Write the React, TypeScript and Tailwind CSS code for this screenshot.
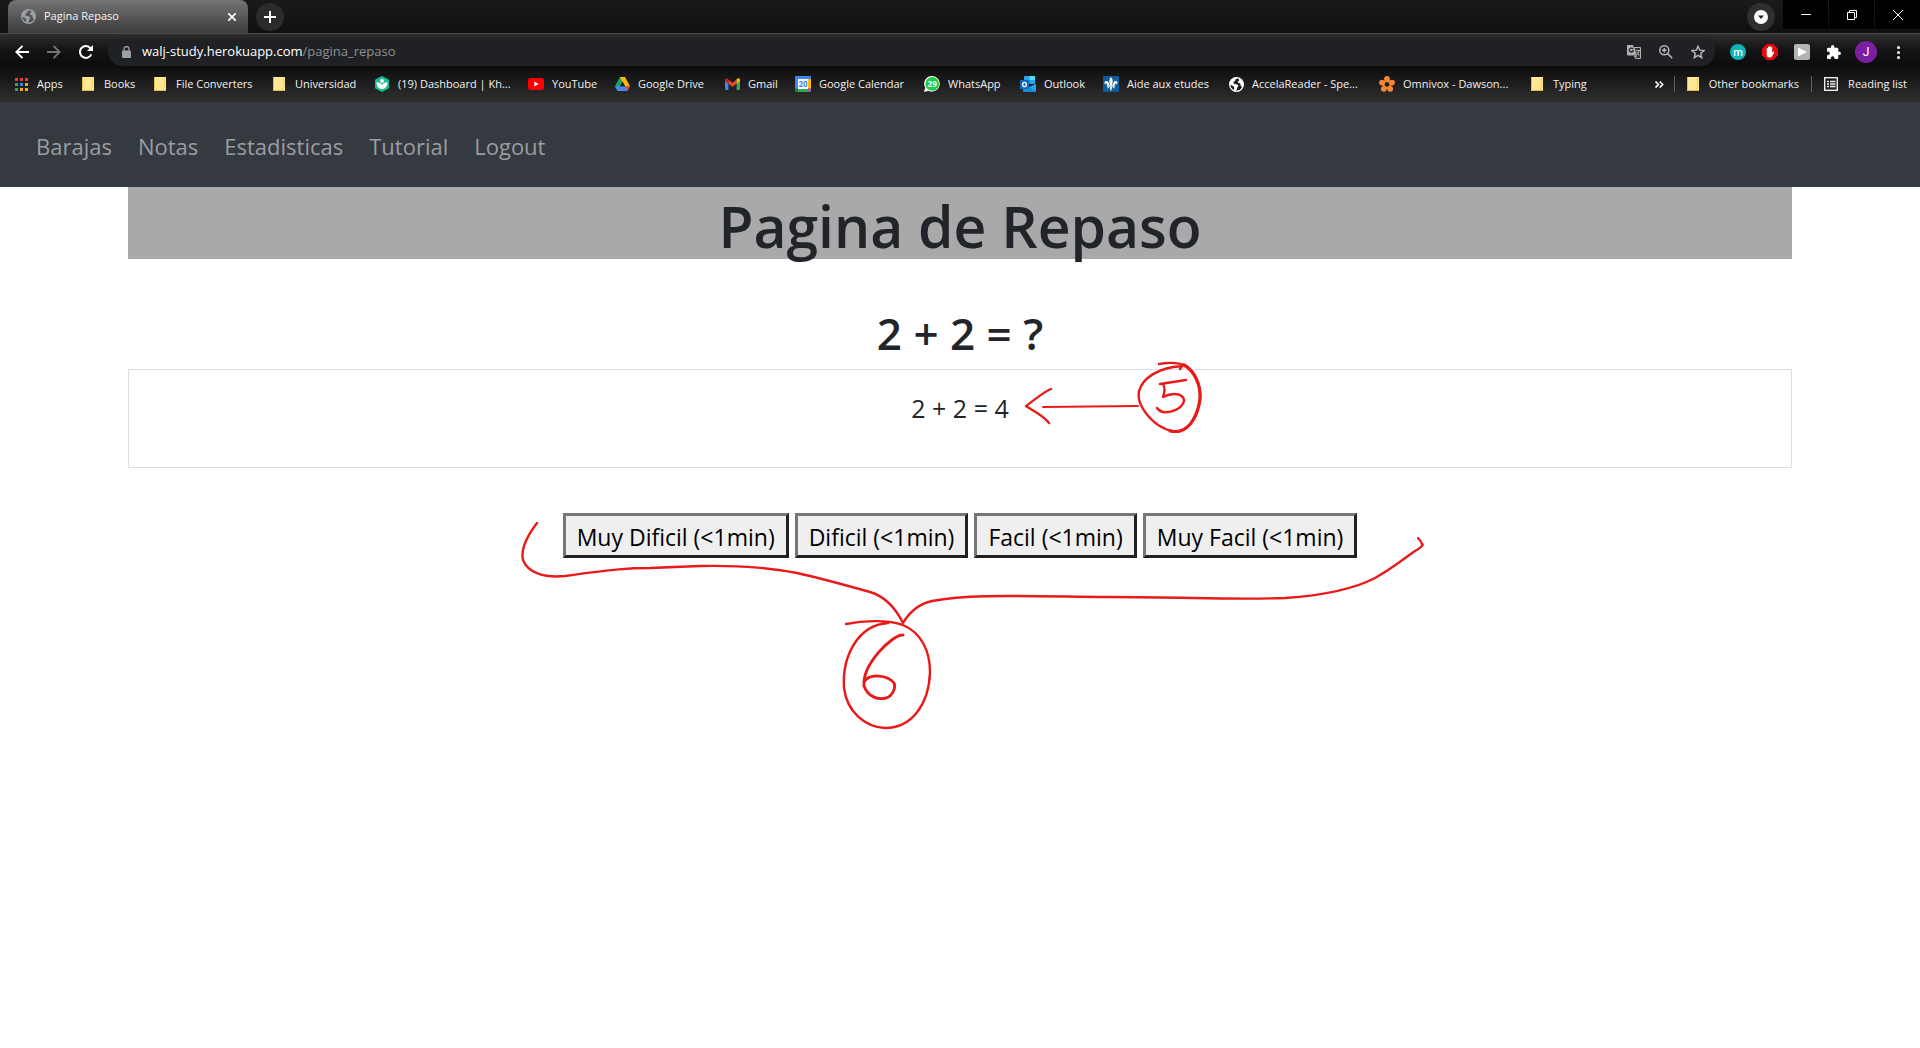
import React from "react";

const Folder = () => (
  <svg width="12" height="14" viewBox="0 0 12 14">
    <path d="M0 0H12V9V14H0Z" fill="#ffe793" />
    <path d="M.5 0V13.5H12" fill="none" stroke="#e2bb4b" />
    <path d="M9.500 13V10.500L10.500 9.500V1" fill="none" stroke="#f3cd62" />
  </svg>
);

const Apps = () => {
  const c = ["#f13a30", "#f13a30", "#f13a30", "#34a853", "#2a8cf5", "#fba31a", "#34a853", "#fba31a", "#fba31a"];
  return (
    <svg width="13" height="13" viewBox="0 0 13 13">
      {c.map((f, i) => (
        <rect key={i} x={(i % 3) * 5} y={Math.floor(i / 3) * 5} width="3" height="3" fill={f} />
      ))}
    </svg>
  );
};

const Khan = () => (
  <svg width="14" height="16" viewBox="0 0 14 16">
    <path d="M7 0L13.2 3.3Q14 3.8 14 4.6V11.4Q14 12.2 13.2 12.7L7 16L.8 12.7Q0 12.2 0 11.4V4.6Q0 3.8.8 3.3Z" fill="#14bf96" />
    <circle cx="7" cy="5" r="1.9" fill="#fff" />
    <path d="M1.500 6.200C4.500 6.400 6.400 7.500 7 9C7.600 7.500 9.500 6.400 12.500 6.200C12.500 10.500 10 13 7 13S1.500 10.500 1.500 6.200Z" fill="#fff" />
  </svg>
);

const YouTube = () => (
  <svg width="16" height="12" viewBox="0 0 16 12">
    <rect width="16" height="12" rx="3" fill="#f00" />
    <path d="M6.300 3.500L10.600 6L6.300 8.500Z" fill="#fff" />
  </svg>
);

const Drive = () => (
  <svg width="15" height="14" viewBox="0 0 15 14">
    <path d="M5 0H7.500L8.500 4L2.700 14L0 9.200Z" fill="#1ea362" />
    <path d="M5 0H10L15 9.200H10Z" fill="#ffba00" />
    <path d="M0 9.200H15L12.300 14H2.700Z" fill="#4688f4" />
    <path d="M7.500 4.500L10 9.200H5Z" fill="#1c1c1c" />
    <path d="M12.300 14L15 9.200H10Z" fill="#ea4335" />
  </svg>
);

const Gmail = () => (
  <svg width="15" height="12" viewBox="0 0 15 12">
    <path d="M0 2V11Q0 12 1 12H3.400V4Z" fill="#4285f4" />
    <path d="M15 2V11Q15 12 14 12H11.600V4Z" fill="#34a853" />
    <path d="M3.400 1.500L7.500 4.700L11.600 1.500V5.700L7.500 8.900L3.400 5.700Z" fill="#ea4335" />
    <path d="M0 2Q0 .2 1.600.2Q2.300.2 3.400 1.300V5.700L0 3.200Z" fill="#c5221f" />
    <path d="M15 2Q15 .2 13.400.2Q12.700.2 11.600 1.300V5.700L15 3.200Z" fill="#fbbc04" />
  </svg>
);

const Calendar = () => (
  <svg width="16" height="16" viewBox="0 0 16 16">
    <rect width="16" height="16" rx="1" fill="#4285f4" />
    <path d="M13 3H16V12.500H13Z" fill="#fbbc04" />
    <path d="M3 12.500H13V16H3Z" fill="#34a853" />
    <path d="M0 12.500H3V16H1Q0 16 0 15Z" fill="#188038" />
    <path d="M13 12.500H16L13 16Z" fill="#ea4335" />
    <rect x="3" y="3" width="10" height="10" fill="#fff" />
    <text x="8" y="11" fontSize="8" fontWeight="700" textAnchor="middle" fill="#4285f4">20</text>
  </svg>
);

const WhatsApp = () => (
  <svg width="16" height="16" viewBox="0 0 16 16">
    <path d="M8.200 0A7.800 7.800 0 1 1 4.500 14.800L0 16L1.300 11.800A7.800 7.800 0 0 1 8.200 0Z" fill="#fff" />
    <circle cx="8.200" cy="7.900" r="6.800" fill="#1fc94c" />
    <text x="8.200" y="11" fontSize="8" fontWeight="700" textAnchor="middle" fill="#fff">29</text>
  </svg>
);

const Outlook = () => (
  <svg width="16" height="16" viewBox="0 0 16 16">
    <path d="M4 1Q4 0 5 0H14Q15 0 15 1V8H4Z" fill="#28a8ea" />
    <path d="M9.500 0H14Q15 0 15 1V4H9.500Z" fill="#50d9ff" />
    <path d="M4 4H9.500V8H4Z" fill="#0364b8" />
    <path d="M3 15V8L9.500 11L16 8V15Q16 16 15 16H4Q3 16 3 15Z" fill="#1490df" />
    <path d="M16 8V15L9.500 11Z" fill="#28a8ea" />
    <rect y="4" width="9" height="9" rx="1" fill="#0f6cbd" />
    <ellipse cx="4.500" cy="8.500" rx="1.900" ry="2.200" fill="none" stroke="#fff" strokeWidth="1.300" />
  </svg>
);

const Fleur = () => (
  <svg width="16" height="16" viewBox="0 0 16 16">
    <rect width="16" height="16" fill="#0f5c9c" />
    <g fill="#fff">
      <path d="M8 1C10 3.500 10 5 9 9H7C6 5 6 3.500 8 1Z" />
      <path d="M6.300 9C6 6.500 5 5 3.300 5C1.500 5 1 7 2 8.500C2.200 7.300 3.600 7.200 4.300 9Z" />
      <path d="M9.700 9C10 6.500 11 5 12.700 5C14.500 5 15 7 14 8.500C13.800 7.300 12.400 7.200 11.700 9Z" />
      <rect x="3.800" y="9.200" width="8.400" height="1.300" />
      <path d="M7 10.500H9L8.800 13L8 15L7.200 13ZM5 10.500H6.500Q6.300 12.500 4.300 12.500ZM11 10.500H9.500Q9.700 12.500 11.700 12.500Z" />
    </g>
  </svg>
);

const Globe = ({ color, land }: { color: string; land: string }) => (
  <svg width="15" height="15" viewBox="0 0 15 15">
    <circle cx="7.500" cy="7.500" r="7.500" fill={color} />
    <path d="M9.500 1.600C7 2 5.800 2.500 6.300 3.800C5 4.200 4 5 4.600 6.500C6 7.300 8.500 6.900 9.300 8.300C9.800 9.600 8 10.200 8 11.500C8 12.500 7.300 13.200 6.700 13.500A6.200 6.200 0 0 0 13 10C12.500 9 11.300 9 11.500 7.500C11.800 6.300 9.500 6.300 8.700 5.300C8.600 4.500 9.800 4 10.200 3.200ZM1.400 7.400C2.500 8.500 4.800 8.600 5 10C5 11.200 5.400 12 4.900 13A6.200 6.200 0 0 1 1.400 7.400Z" fill={land} />
  </svg>
);

const Omnivox = () => (
  <svg width="16" height="16" viewBox="0 0 16 16">
    <g fill="#f58634">
      <circle cx="8" cy="2.900" r="2.900" />
      <circle cx="13" cy="6.600" r="2.900" />
      <circle cx="11.200" cy="12.800" r="2.900" />
      <circle cx="4.800" cy="12.800" r="2.900" />
      <circle cx="3" cy="6.600" r="2.900" />
      <circle cx="8" cy="8.500" r="4.500" />
    </g>
    <circle cx="8" cy="8.400" r="2.400" fill="#2a211c" />
  </svg>
);

type Mark = { label: string; icon: React.ReactNode; w: string };
const marks: Mark[] = [
  { label: "Apps", icon: <Apps />, w: "w-[67px]" },
  { label: "Books", icon: <Folder />, w: "w-[72px]" },
  { label: "File Converters", icon: <Folder />, w: "w-[119px]" },
  { label: "Universidad", icon: <Folder />, w: "w-[103px]" },
  { label: "(19) Dashboard | Kh...", icon: <Khan />, w: "w-[154px]" },
  { label: "YouTube", icon: <YouTube />, w: "w-[86px]" },
  { label: "Google Drive", icon: <Drive />, w: "w-[110px]" },
  { label: "Gmail", icon: <Gmail />, w: "w-[71px]" },
  { label: "Google Calendar", icon: <Calendar />, w: "w-[129px]" },
  { label: "WhatsApp", icon: <WhatsApp />, w: "w-[96px]" },
  { label: "Outlook", icon: <Outlook />, w: "w-[83px]" },
  { label: "Aide aux etudes", icon: <Fleur />, w: "w-[125px]" },
  { label: "AccelaReader - Spe...", icon: <Globe color="#fff" land="#1c1c1c" />, w: "w-[151px]" },
  { label: "Omnivox - Dawson...", icon: <Omnivox />, w: "w-[150px]" },
  { label: "Typing", icon: <Folder />, w: "w-[80px]" },
];

const TabStrip = () => (
  <div className="flex h-[33px] items-start bg-gradient-to-b from-[#1a1a1a] to-[#101010]">
    <div className="ml-2 flex h-[33px] w-60 items-center rounded-t-lg bg-gradient-to-b from-[#757575] to-[#3c3c3c] pl-[13px] pr-2 text-[#f5f5f5]">
      <Globe color="#9aa0a6" land="#555" />
      <span className="ml-2 flex-1 text-[11px]">Pagina Repaso</span>
      <button aria-label="Close tab" className="p-1">
        <svg width="8" height="8" viewBox="0 0 8 8" stroke="#fff" strokeWidth="1.700"><path d="M0 0L8 8M8 0L0 8" /></svg>
      </button>
    </div>
    <button aria-label="New tab" className="ml-2 mt-[3px] flex size-7 items-center justify-center rounded-full bg-[#2b2b2b]">
      <svg width="12" height="12" viewBox="0 0 12 12" stroke="#fff" strokeWidth="2"><path d="M6 0V12M0 6H12" /></svg>
    </button>
    <div className="flex-1" />
    <button aria-label="Search tabs" className="mr-2 mt-[3px] flex size-7 items-center justify-center rounded-full bg-[#2f2f2f]">
      <svg width="14" height="14" viewBox="0 0 14 14"><circle cx="7" cy="7" r="7" fill="#fff" /><path d="M4 5.500H10L7 9Z" fill="#222" /></svg>
    </button>
    <div className="flex h-[29px] gap-px text-white">
      <button aria-label="Minimize" className="flex w-[45px] items-center justify-center bg-black">
        <svg width="10" height="10" viewBox="0 0 10 10"><path d="M0 4.500H10" stroke="#fff" /></svg>
      </button>
      <button aria-label="Restore" className="flex w-[45px] items-center justify-center bg-black">
        <svg width="10" height="10" viewBox="0 0 10 10" fill="none" stroke="#fff"><path d="M.5 2.500H7.500V9.500H.5ZM2.500 2.500V.5H9.500V7.500H7.500" /></svg>
      </button>
      <button aria-label="Close" className="flex w-[45px] items-center justify-center bg-black">
        <svg width="10" height="10" viewBox="0 0 10 10" stroke="#fff"><path d="M0 0L10 10M10 0L0 10" /></svg>
      </button>
    </div>
  </div>
);

const Toolbar = () => (
  <div className="flex h-[33px] items-center border-t border-[#4a4a4a] bg-gradient-to-b from-[#2e2e2e] via-[#141414] to-[#0c0c0c] pt-1">
    <div className="flex w-[108px] items-center gap-[18px] pl-[15px]">
      <button aria-label="Back">
        <svg width="14" height="14" viewBox="0 0 14 14" fill="none" stroke="#fff" strokeWidth="1.900"><path d="M14 7H1.500M7.500 .8L1.300 7L7.500 13.200" /></svg>
      </button>
      <button aria-label="Forward">
        <svg width="14" height="14" viewBox="0 0 14 14" fill="none" stroke="#757575" strokeWidth="1.900"><path d="M0 7H12.500M6.500 .8L12.700 7L6.500 13.200" /></svg>
      </button>
      <button aria-label="Reload">
        <svg width="14" height="14" viewBox="0 0 14 14"><path d="M12.300 9.300A5.900 5.900 0 1 1 11.500 3.300" fill="none" stroke="#fff" strokeWidth="2" /><path d="M14 0V6H8Z" fill="#fff" /></svg>
      </button>
    </div>
    <div className="flex h-7 flex-1 items-center rounded-full bg-[#202124] pl-[14px] pr-[10px]">
      <svg width="9" height="12" viewBox="0 0 9 12"><rect y="4.500" width="9" height="7.500" rx="1" fill="#9aa0a6" /><path d="M2 5V3A2.500 2.500 0 0 1 7 3V5" fill="none" stroke="#9aa0a6" strokeWidth="1.300" /></svg>
      <input aria-label="Address" className="sr-only" defaultValue="walj-study.herokuapp.com/pagina_repaso" />
      <span className="ml-[11px] flex-1 text-[13px] text-[#8d9093]"><span className="text-white">walj-study.herokuapp.com</span>/pagina_repaso</span>
      <div className="flex items-center gap-[18px]">
        <button aria-label="Translate">
          <svg width="14" height="14" viewBox="0 0 14 14"><path d="M0 0H6L9 10.500H1Q0 10.500 0 9.500Z" fill="#b0b0b0" /><path d="M7 2.500H13.500V13.500H8.500L7.500 11.500H9.500Z" fill="#333" stroke="#b0b0b0" /><path d="M6 4A2 2 0 1 0 6.200 5.800H4.600" fill="none" stroke="#222" strokeWidth="1.200" /><path d="M8.500 5.500H13M12.300 5.500Q11.800 8.500 9.300 10M9.500 7L12.300 10.500" stroke="#b0b0b0" fill="none" /></svg>
        </button>
        <button aria-label="Zoom">
          <svg width="14" height="14" viewBox="0 0 14 14" fill="none" stroke="#b8b8b8" strokeWidth="1.500"><circle cx="5.300" cy="5.300" r="4.500" /><path d="M8.600 8.600L13.300 13.300M5.300 3V7.600M3 5.300H7.600" /></svg>
        </button>
        <button aria-label="Bookmark this page">
          <svg width="14" height="14" viewBox="0 0 14 14" fill="none" stroke="#b8b8b8" strokeWidth="1.400"><path d="M7 1.200L8.700 5.200L13 5.600L9.700 8.400L10.700 12.700L7 10.400L3.300 12.700L4.300 8.400L1 5.600L5.300 5.200Z" /></svg>
        </button>
      </div>
    </div>
    <div className="flex items-center pl-[15px] pr-5">
      <button className="flex size-4 items-center justify-center rounded-full bg-[#0fb5b5] font-['Roboto',sans-serif] text-[11px] font-medium leading-none text-white">m</button>
      <button aria-label="Ad blocker" className="ml-4">
        <svg width="16" height="16" viewBox="0 0 16 16"><path d="M4.700 0H11.300L16 4.700V11.300L11.300 16H4.700L0 11.300V4.700Z" fill="#e00d0d" /><path d="M4.700 8V4.500Q5.300 3.700 6 4.500V3Q6.700 2.200 7.400 3V2.500Q8.100 1.800 8.800 2.500V3.300Q9.500 2.600 10.200 3.300V8.500L11.500 7.500Q12.500 7.500 12 8.500L10 12.500Q9.300 13.500 7.500 13.500Q4.700 13.500 4.700 10Z" fill="#fff" /></svg>
      </button>
      <button aria-label="Player" className="ml-4">
        <svg width="16" height="16" viewBox="0 0 16 16"><rect width="16" height="16" rx="2" fill="#b3b3b3" /><path d="M4 3.500L13 8L4 12.500Z" fill="#fff" /></svg>
      </button>
      <button aria-label="Extensions" className="ml-[17px]">
        <svg width="14" height="14" viewBox="2 1 21 21" fill="#fff"><path d="M20.500 11H19V7c0-1.100-.9-2-2-2h-4V3.500a2.500 2.500 0 0 0-5 0V5H4c-1.100 0-2 .9-2 2v3.800h1.500a2.700 2.700 0 0 1 0 5.400H2V20c0 1.100.9 2 2 2h3.800v-1.500a2.700 2.700 0 0 1 5.400 0V22H17c1.100 0 2-.9 2-2v-4h1.500a2.500 2.500 0 0 0 0-5z" /></svg>
      </button>
      <button className="ml-[14px] flex size-[22px] items-center justify-center rounded-full bg-[#7b1fa2] font-['Roboto',sans-serif] text-xs leading-none text-white">J</button>
      <button aria-label="Menu" className="ml-5">
        <svg width="3" height="13" viewBox="0 0 3 13" fill="#fff"><circle cx="1.500" cy="1.500" r="1.500" /><circle cx="1.500" cy="6.500" r="1.500" /><circle cx="1.500" cy="11.500" r="1.500" /></svg>
      </button>
    </div>
  </div>
);

const Bookmarks = () => (
  <div className="flex h-9 items-center bg-gradient-to-b from-[#0d0d0d] to-[#303030] px-[13px] text-[11px] text-[#f1f1f1]">
    {marks.map((m) => (
      <a key={m.label} href="#" className={"flex shrink-0 items-center whitespace-nowrap " + m.w}>
        <span className="mr-2 flex w-4 shrink-0 justify-center">{m.icon}</span>
        {m.label}
      </a>
    ))}
    <div className="flex-1" />
    <button aria-label="More bookmarks">
      <svg width="9" height="7" viewBox="0 0 9 7" fill="none" stroke="#fff" strokeWidth="1.600"><path d="M.5 .5L3.500 3.500L.5 6.500M4.700 .5L7.700 3.500L4.700 6.500" /></svg>
    </button>
    <div className="ml-[10px] h-4 w-px bg-[#5f5f5f]" />
    <a href="#" className="ml-3 flex items-center gap-[10px] whitespace-nowrap"><Folder />Other bookmarks</a>
    <div className="ml-3 h-4 w-px bg-[#5f5f5f]" />
    <a href="#" className="ml-3 flex items-center gap-[10px] whitespace-nowrap">
      <svg width="14" height="14" viewBox="0 0 14 14" fill="none" stroke="#eee"><rect x=".7" y=".7" width="12.600" height="12.600" strokeWidth="1.400" /><path d="M3 4.500H5M6 4.500H11.500M3 7H5M6 7H11.500M3 9.500H5M6 9.500H11.500" strokeWidth="1.500" /></svg>
      Reading list
    </a>
  </div>
);

const links = ["Barajas", "Notas", "Estadisticas", "Tutorial", "Logout"];
const grades = ["Muy Dificil (<1min)", "Dificil (<1min)", "Facil (<1min)", "Muy Facil (<1min)"];

const Annotations = () => (
  <svg className="pointer-events-none absolute left-1/2 top-0 -translate-x-1/2" width="960" height="580" viewBox="480 187 960 580" fill="none" stroke="#e81a1a" strokeWidth="2.400" strokeLinecap="round" strokeLinejoin="round">
    <path d="M1051 389C1043 392 1032 402 1026 406C1035 412 1044 416 1049 423" />
    <path d="M1043 407L1138 406" strokeWidth="1.900" />
    <path d="M1159 364C1170 362 1180 363 1186 366C1196 373 1201 386 1200 399C1198 414 1191 428 1180 431C1172 433 1160 428 1152 420C1143 411 1137 401 1139 391C1143 378 1157 368 1182 366L1180 369" />
    <path d="M1184 365C1195 371 1201 386 1200 399C1198 414 1191 428 1180 431Q1175 432 1170 431" strokeWidth="3.200" />
    <path d="M1160 384L1186 380M1163 384Q1166 389 1163 397C1176 391 1184 395 1184 401C1182 409 1171 413 1163 412Q1159 411 1157 408" />
    <path d="M537 523C524 540 521 551 523 560C528 573 544 578 565 576C615 569 630 568 650 568L700 566C747 565 774 569 797 573C820 578 845 585 870 592C887 597 897 611 903 623C909 613 918 604 932 601C970 594 1010 596 1110 597C1190 597 1230 600 1285 598C1315 596 1350 591 1375 578C1393 568 1402 560 1415 551Q1425 545 1422 544Q1421 541 1418 538" />
    <path d="M846 624C865 620 889 620 903 625C922 633 930 652 930 672C929 704 912 728 885 728C865 727 847 712 844 688C842 656 858 625 888 623" />
    <path d="M903 635C893 634 862 664 864 686C868 697 878 700 886 698C893 696 896 687 894 683C888 675 869 673 864 682" strokeWidth="2.900" />
  </svg>
);

export default function App() {
  return (
    <div className="min-h-screen bg-white font-['Open_Sans','Noto_Sans',sans-serif]">
      <header>
        <TabStrip />
        <Toolbar />
        <Bookmarks />
      </header>
      <nav className="flex h-[85px] items-center gap-[26px] bg-[#343a40] px-9 pt-1 text-[22px] text-[#9a9da0]">
        {links.map((l) => (
          <a key={l} href="#">{l}</a>
        ))}
      </nav>
      <main className="relative text-center text-[#212529]">
        <div className="mx-32">
          <h1 className="h-[72px] bg-[#a9a9a9] text-[57px] font-semibold leading-[78px]">Pagina de Repaso</h1>
          <h2 className="mt-[50px] h-[60px] text-[44px] font-semibold leading-[48px]">2 + 2 = ?</h2>
          <div className="h-[99px] border border-[#dfdfdf] pt-[22px] text-[25px] leading-8">2 + 2 = 4</div>
          <div className="mt-[45px] flex justify-center gap-[6px] text-[23px] text-black">
            {grades.map((g) => (
              <button key={g} className="h-[45px] border-[3px] border-b-[#212121] border-l-[#767676] border-r-[#212121] border-t-[#767676] bg-[#efefef] px-[11px] pt-1">{g}</button>
            ))}
          </div>
        </div>
        <Annotations />
      </main>
    </div>
  );
}
